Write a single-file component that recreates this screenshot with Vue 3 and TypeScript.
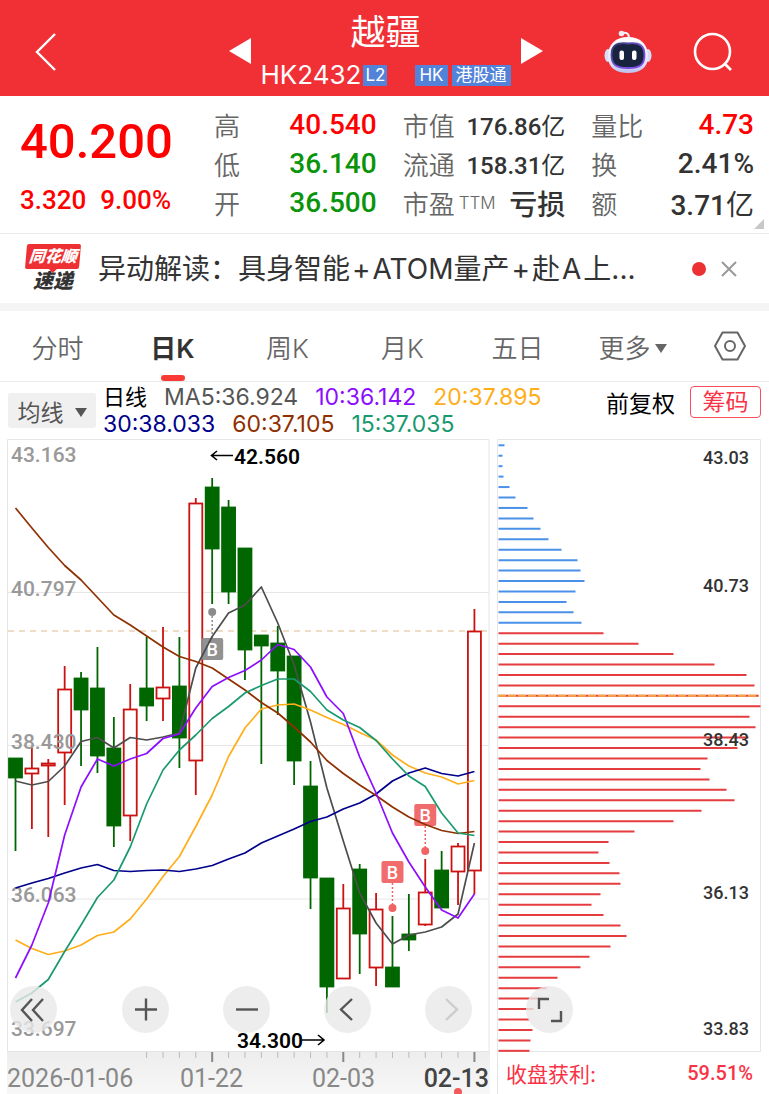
<script setup lang="ts">
import { ref } from 'vue'

interface Candle {
  up: boolean
  top: number
  bottom: number
  high: number
  low: number
}

interface Metric {
  label: string
  note?: string
  value: string
  unit?: string
  tone: 'up' | 'down' | 'plain'
  size: 'large' | 'small'
}

const metricGroups: Metric[][] = [
  [
    { label: '高', value: '40.540', tone: 'up', size: 'large' },
    { label: '低', value: '36.140', tone: 'down', size: 'large' },
    { label: '开', value: '36.500', tone: 'down', size: 'large' },
  ],
  [
    { label: '市值', value: '176.86', unit: '亿', tone: 'plain', size: 'small' },
    { label: '流通', value: '158.31', unit: '亿', tone: 'plain', size: 'small' },
    { label: '市盈', note: 'TTM', value: '亏损', tone: 'plain', size: 'large' },
  ],
  [
    { label: '量比', value: '4.73', tone: 'up', size: 'large' },
    { label: '换', value: '2.41%', tone: 'plain', size: 'large' },
    { label: '额', value: '3.71', unit: '亿', tone: 'plain', size: 'large' },
  ],
]

const tabs = ['分时', '日K', '周K', '月K', '五日', '更多']
const activeTab = ref('日K')
const newsVisible = ref(true)

const STEP = 16.39
const px = (i: number) => 15.5 + i * STEP

const c = (up: number, top: number, bottom: number, high: number, low: number): Candle => ({
  up: up === 1, top, bottom, high, low,
})

const candles: Candle[] = [
  c(0, 758, 778, 758, 851), c(1, 768, 774, 748, 829), c(1, 763, 766, 759, 837),
  c(1, 689, 753, 666, 805), c(0, 678, 710, 672, 766), c(0, 688, 756, 647, 773),
  c(0, 748, 826, 717, 847), c(1, 709, 816, 684, 841), c(0, 688, 706, 637, 721),
  c(1, 687, 699, 627, 721), c(0, 686, 738, 637, 768), c(1, 503, 761, 498, 795),
  c(0, 487, 549, 478, 604), c(0, 507, 592, 500, 604), c(0, 548, 650, 548, 680),
  c(0, 635, 646, 635, 764), c(0, 643, 671, 626, 715), c(0, 656, 761, 656, 785),
  c(0, 786, 878, 761, 909), c(0, 878, 987, 878, 1013), c(1, 908, 979, 884, 979),
  c(0, 869, 934, 864, 974), c(1, 909, 968, 893, 986), c(0, 967, 987, 916, 987),
  c(0, 934, 940, 894, 951), c(1, 892, 925, 859, 926), c(0, 870, 908, 851, 908),
  c(1, 846, 872, 843, 905), c(1, 631, 871, 609, 894),
]

const averages = [
  { color: '#4d4d4d', ys: [781, 785, 781.5, 766, 741.5, 737.5, 748, 737.5, 740, 737, 733, 668, 636.5, 613, 605, 587, 623, 665, 722, 788, 841, 893, 923, 944, 935, 932, 927, 914, 843] },
  { color: '#ffae1a', ys: [940, 948.5, 954.5, 951, 945, 935.5, 932, 919, 899, 876.5, 856.5, 826.5, 795, 756.5, 728, 709, 705, 704, 710, 717.5, 724.5, 732.5, 740, 755, 766, 773, 777, 784, 780.5] },
  { color: '#00008c', ys: [888, 883, 878.5, 873, 868, 864.5, 870.5, 871.5, 870.5, 870, 871.5, 869, 865.5, 859, 853, 843, 836, 829, 821.5, 817, 809, 803, 794, 781, 773, 768, 773.5, 776, 771.5] },
  { color: '#8f3000', ys: [508, 528, 547.5, 565.5, 580, 597.5, 615, 625, 636, 647, 656.5, 661.5, 668, 679, 690, 702.5, 713, 727, 742, 760.5, 773.5, 785, 795.5, 807, 817, 824.5, 830.5, 833.5, 831.5] },
  { color: '#8c0dff', ys: [978, 945, 903, 835, 787, 759, 766, 759, 753.5, 738.5, 734, 708, 686.5, 677.5, 670.5, 660, 644.5, 649.5, 667, 697, 713.5, 757, 793, 833, 862, 887, 910, 918, 894] },
  { color: '#1a9970', ys: [1002, 993, 979.5, 951.5, 925, 897.5, 880, 847, 804, 770, 750, 735, 718.5, 706.5, 693, 685.5, 679, 679, 691.5, 710, 720, 727.5, 740.5, 759, 776, 786.5, 813, 833, 835.5] },
]

const points = (ys: number[]) => ys.map((y, i) => `${px(i)},${y}`).join(' ')

const priceLabels = [
  { y: 462, text: '43.163' }, { y: 596, text: '40.797' }, { y: 749, text: '38.430' },
  { y: 902, text: '36.063' }, { y: 1036, text: '33.697' },
]

const markers = [
  { x: px(12), box: 638, dot: 612, line: [616, 638], fill: '#8c8c8c', r: 4 },
  { x: px(23), box: 861, dot: 908, line: [883, 905], fill: '#f06464', r: 4 },
  { x: px(25), box: 804, dot: 851, line: [826, 848], fill: '#f06464', r: 4 },
]

const ticks = Array.from({ length: 21 }, (_, k) => {
  const i = k + 8
  return { x: px(i), major: i === 12 || i === 20 || i === 28 }
})

const chipLengths = [
  6, 4, 4, 5, 11, 17, 29, 35, 42, 50, 63, 79, 82, 86, 77, 68, 75, 83,
  105, 140, 175, 216, 248, 256, 260, 262, 251, 257, 250, 239, 209,
  202, 211, 228, 236, 203, 175, 136, 110, 100, 111, 121, 122, 102, 93, 105, 122, 128,
  112, 91, 82, 59, 48, 41, 35, 31, 34, 32, 31,
]
const chips = chipLengths.map((len, i) => ({
  len,
  y: 445.3 + i * 10.44,
  color: i < 18 ? '#4a90e8' : '#e63c3f',
}))

const chipLabels = [
  { y: 464, text: '43.03' }, { y: 592, text: '40.73' }, { y: 746, text: '38.43' },
  { y: 899, text: '36.13' }, { y: 1035, text: '33.83' },
]

const tools = [
  { name: '最早', d: 'M22 13 L12 24 L22 35 M33 13 L23 24 L33 35', cls: 'first' },
  { name: '放大', d: 'M13 23.5 H35 M24 12.5 V34.5', cls: '' },
  { name: '缩小', d: 'M13 23.5 H35', cls: '' },
  { name: '向左', d: 'M28 13 L17 23.5 L28 34', cls: '' },
  { name: '向右', d: 'M21 13 L32 23.5 L21 34', cls: 'faint' },
  { name: '全屏', d: 'M13 23 V13 H23 M35 25 V35 H25', cls: 'corner' },
]
</script>

<template>
  <div class="page">
    <header class="top">
      <button class="icon-btn back" aria-label="返回">
        <svg width="24" height="42" viewBox="0 0 24 42"><path d="M21 3 L3 21 L21 39" fill="none" stroke="#fff" stroke-width="2.4" /></svg>
      </button>
      <div class="title">
        <button class="icon-btn" aria-label="上一只">
          <svg width="22" height="26" viewBox="0 0 22 26"><path d="M22 0 V26 L0 13 Z" fill="#fff" /></svg>
        </button>
        <div class="names">
          <h1>越疆</h1>
          <div class="code">
            <span>HK2432</span><span class="badge l2">L2</span>
            <span class="badge hk">HK</span><span class="badge">港股通</span>
          </div>
        </div>
        <button class="icon-btn" aria-label="下一只">
          <svg width="22" height="26" viewBox="0 0 22 26"><path d="M0 0 V26 L22 13 Z" fill="#fff" /></svg>
        </button>
      </div>
      <div class="actions">
        <button class="icon-btn" aria-label="智能助手">
          <svg width="48" height="46" viewBox="0 0 48 46">
            <defs>
              <linearGradient id="shell" x1="0" y1="0" x2="0" y2="1">
                <stop offset="0" stop-color="#ffffff" /><stop offset="0.7" stop-color="#e4e6fa" /><stop offset="1" stop-color="#bcbef0" />
              </linearGradient>
              <linearGradient id="rim" x1="0" y1="0" x2="1" y2="1">
                <stop offset="0" stop-color="#2b3566" /><stop offset="0.5" stop-color="#7656d8" /><stop offset="1" stop-color="#7b42e8" />
              </linearGradient>
            </defs>
            <path d="M18 4 C23 3 25 5 25 9" fill="none" stroke="#f3f0fa" stroke-width="2" />
            <circle cx="17.500" cy="4.500" r="2.800" fill="#f6eaf2" />
            <ellipse cx="4" cy="26.500" rx="3.500" ry="6.500" fill="#d9dcf5" />
            <ellipse cx="44" cy="26.500" rx="3.500" ry="6.500" fill="#d9dcf5" />
            <path d="M24 8 C36 8 44 15 44 27 C44 39 36 44 24 44 C12 44 4 39 4 27 C4 15 12 8 24 8 Z" fill="url(#shell)" />
            <path d="M24 14.500 C36 13 40.500 17 40.500 26 C40.500 36 36 39 24 39 C12 39 7.500 36 7.500 26 C7.500 17 12 13 24 14.500 Z" fill="#18233f" stroke="url(#rim)" stroke-width="1.800" />
            <rect x="15.500" y="21.500" width="4.500" height="9.500" rx="2" fill="#fff" />
            <rect x="28" y="21.500" width="4.500" height="9.500" rx="2" fill="#fff" />
          </svg>
        </button>
        <button class="icon-btn" aria-label="搜索">
          <svg width="42" height="42" viewBox="0 0 42 42" fill="none" stroke="#fff" stroke-width="2.600"><circle cx="20.500" cy="20.500" r="17.500" /><path d="M32 32 L39 39" /></svg>
        </button>
      </div>
    </header>

    <section class="quote">
      <div class="price">
        <strong>40.200</strong>
        <p><span>3.320</span><span>9.00%</span></p>
      </div>
      <dl v-for="(group, g) in metricGroups" :key="g" class="metrics">
        <div v-for="m in group" :key="m.label" class="metric">
          <dt>{{ m.label }}<small v-if="m.note">{{ m.note }}</small></dt>
          <dd :class="[m.tone, m.size]">{{ m.value }}<span v-if="m.unit">{{ m.unit }}</span></dd>
        </div>
      </dl>
      <svg class="corner-mark" width="10" height="10" viewBox="0 0 10 10"><path d="M10 0 V10 H0 Z" fill="#c8c8c8" /></svg>
    </section>

    <section v-if="newsVisible" class="news">
      <div class="logo">
        <span class="logo-top">同花顺</span>
        <span class="logo-bottom">速递</span>
      </div>
      <a href="#news">异动解读：具身智能<span>+</span>ATOM量产<span>+</span>赴<span>A</span>上...</a>
      <i class="dot"></i>
      <button class="icon-btn" aria-label="关闭" @click="newsVisible = false">
        <svg width="16" height="16" viewBox="0 0 16 16"><path d="M1 1 L15 15 M15 1 L1 15" stroke="#999" stroke-width="2" /></svg>
      </button>
    </section>

    <nav class="tabs">
      <button v-for="t in tabs" :key="t" :class="['tab', { active: t === activeTab }]" @click="activeTab = t">
        {{ t }}<svg v-if="t === '更多'" width="12" height="9" viewBox="0 0 12 9"><path d="M0 0 H12 L6 9 Z" fill="#666" /></svg>
      </button>
      <button class="icon-btn settings" aria-label="设置">
        <svg width="34" height="30" viewBox="0 0 34 30" fill="none" stroke="#666" stroke-width="2"><path d="M9.500 1.500 H24.500 L32 15 L24.500 28.500 H9.500 L2 15 Z" stroke-linejoin="round" /><circle cx="17" cy="15" r="5" /></svg>
      </button>
    </nav>

    <section class="legend">
      <button class="ma-btn">均线<svg width="12" height="9" viewBox="0 0 12 9"><path d="M0 0 H12 L6 9 Z" fill="#555" /></svg></button>
      <div class="ma-values">
        <p><b>日线</b><span class="m5">MA5:36.924</span><span class="m10">10:36.142</span><span class="m20">20:37.895</span></p>
        <p><span class="m30">30:38.033</span><span class="m60">60:37.105</span><span class="m15">15:37.035</span></p>
      </div>
      <button class="adjust">前复权</button>
      <button class="chip-btn">筹码</button>
    </section>

    <main class="charts">
      <svg class="kline" viewBox="0 439 490 655">
        <defs>
          <linearGradient id="axis" x1="0" y1="0" x2="0" y2="1">
            <stop offset="0" stop-color="#ededed" /><stop offset="1" stop-color="#f7f7f7" />
          </linearGradient>
        </defs>
        <rect x="7" y="1051" width="483" height="43" fill="url(#axis)" />
        <path d="M7.500 1051.500 V439.500 H489 V1051.500 Z M8 592.500 H489 M8 745.500 H489 M8 899 H489" fill="none" stroke="#e6e6e6" />
        <path d="M8 631 H489" stroke="#dfb98a" stroke-dasharray="6 5" />
        <g v-for="(k, i) in candles" :key="i" :stroke="k.up ? '#cc1111' : '#006600'" stroke-width="1.800">
          <line :x1="px(i)" :x2="px(i)" :y1="k.high" :y2="k.low" />
          <rect :x="px(i) - 6.500" :y="k.top + 0.500" width="13" :height="k.bottom - k.top - 1" :fill="k.up ? '#fff' : '#006600'" />
        </g>
        <g class="grey">
          <text v-for="l in priceLabels" :key="l.text" x="11" :y="l.y">{{ l.text }}</text>
        </g>
        <g v-for="(m, i) in markers" :key="'m' + i">
          <line :x1="m.x" :x2="m.x" :y1="m.line[0]" :y2="m.line[1]" :stroke="m.fill" stroke-width="1.500" stroke-dasharray="2 2" />
          <circle :cx="m.x" :cy="m.dot" :r="m.r" :fill="m.fill" />
          <rect :x="m.x - 11" :y="m.box" width="22" height="22" rx="2" :fill="m.fill" opacity="0.950" />
          <text class="marker" :x="m.x" :y="m.box + 18">B</text>
        </g>
        <polyline v-for="a in averages" :key="a.color" :points="points(a.ys)" fill="none" :stroke="a.color" stroke-width="1.700" stroke-linejoin="round" />
        <g class="extreme">
          <text x="234" y="464">42.560</text>
          <text x="237" y="1048">34.300</text>
          <path d="M233 455.500 H212 M217 451 L211.500 455.500 L217 460 M302 1040 H323 M318 1035 L324 1040 L318 1045" fill="none" stroke="#000" stroke-width="1.600" />
        </g>
        <line v-for="t in ticks" :key="t.x" :x1="t.x" :x2="t.x" y1="1052" :y2="t.major ? 1062 : 1058" :stroke="t.major ? '#888' : '#bbb'" :stroke-width="t.major ? 2 : 1" />
        <g class="dates">
          <text x="7" y="1087">2026-01-06</text>
          <text x="180" y="1087">01-22</text>
          <text x="312" y="1087">02-03</text>
          <text class="today" x="489" y="1087">02-13</text>
        </g>
        <circle cx="458" cy="1092" r="4" fill="#f05a5a" />
      </svg>

      <div class="distribution">
        <svg viewBox="490 439 279 613">
          <path d="M497.500 1052 V439.500 H760.500 V1052 M498 1051.500 H760" fill="none" stroke="#e6e6e6" />
          <line v-for="b in chips" :key="b.y" x1="498.500" :x2="498.500 + b.len" :y1="b.y" :y2="b.y" :stroke="b.color" stroke-width="2" />
          <path d="M498 695.700 H759" stroke="#f5a742" stroke-width="2" stroke-dasharray="8 2" />
          <text v-for="l in chipLabels" :key="l.text" x="749" :y="l.y">{{ l.text }}</text>
        </svg>
        <p class="profit"><span>收盘获利:</span><b>59.51%</b></p>
      </div>

      <div class="tools">
        <button v-for="t in tools" :key="t.name" :aria-label="t.name" :class="t.cls">
          <svg width="47" height="47" viewBox="0 0 47 47"><path :d="t.d" fill="none" stroke-width="2.400" /></svg>
        </button>
      </div>
    </main>
  </div>
</template>

<style>
body {
  margin: 0;
  background: #fff;
}
</style>

<style scoped>
.page {
  font-family: Inter, "Noto Sans CJK SC", sans-serif;
  color: #333;
  background: #fff;
}
button {
  border: 0;
  padding: 0;
  background: none;
  font: inherit;
  color: inherit;
  cursor: pointer;
}
p, h1, dl, dd {
  margin: 0;
}
.icon-btn {
  display: flex;
  align-items: center;
  justify-content: center;
}
.top {
  display: grid;
  grid-template-columns: 1fr auto 1fr;
  height: 96px;
  background: #f03035;
  color: #fff;
}
.back {
  justify-self: start;
  padding: 8px 0 0 34px;
}
.title {
  display: flex;
  align-items: center;
  gap: 10px;
  padding-left: 2px;
}
.title .icon-btn {
  padding-top: 6px;
}
.names {
  display: flex;
  flex-direction: column;
  align-items: center;
}
h1 {
  font-size: 35px;
  line-height: 44px;
  font-weight: 400;
  margin-top: 8px;
}
.code {
  display: flex;
  align-items: center;
  font-size: 26px;
  line-height: 30px;
  margin-top: 6px;
  margin-bottom: 4px;
}
.badge {
  background: #5383d9;
  font-size: 17px;
  line-height: 21px;
  padding: 0 4px;
}
.l2 {
  margin-left: 2px;
  padding: 0 2px;
}
.hk {
  margin: 0 4px 0 28px;
}
.actions {
  display: flex;
  justify-content: flex-end;
  gap: 40px;
  padding: 8px 35px 0 0;
}
.quote {
  position: relative;
  display: grid;
  grid-template-columns: 188px 1fr 1fr 1fr;
  column-gap: 26px;
  padding: 9px 15px 11px 0;
  border-bottom: 1px solid #e9e9e9;
}
.price {
  padding-left: 20px;
  color: #f00;
  font-family: Roboto, sans-serif;
  font-weight: 500;
}
.price strong {
  display: block;
  font-size: 49px;
  line-height: 60px;
  font-weight: 500;
  padding-top: 7px;
}
.price p {
  display: flex;
  gap: 14px;
  font-size: 26px;
  line-height: 32px;
  padding-top: 12px;
}
.metric {
  display: flex;
  justify-content: space-between;
  align-items: center;
  height: 39px;
}
dt {
  font-size: 26px;
  color: #666;
  font-weight: 350;
  white-space: nowrap;
}
dt small {
  font-size: 17px;
  margin-left: 4px;
  vertical-align: 5px;
}
dd {
  font-family: Roboto, "Noto Sans CJK SC", sans-serif;
  font-weight: 500;
  white-space: nowrap;
}
dd span {
  font-weight: 400;
}
.large {
  font-size: 28px;
}
.small {
  font-size: 24px;
}
.up {
  color: #f00;
}
.down {
  color: #0a940a;
}
.corner-mark {
  position: absolute;
  right: 5px;
  bottom: 4px;
}
.news {
  display: flex;
  align-items: center;
  height: 69px;
  padding: 0 32px 0 24px;
  border-bottom: 8px solid #f4f4f4;
}
.logo {
  display: flex;
  flex-direction: column;
  align-items: center;
  width: 58px;
  font-weight: 900;
  font-style: italic;
  white-space: nowrap;
}
.logo-top {
  position: relative;
  width: 54px;
  background: #ee3035;
  color: #fff;
  border-radius: 2px;
  transform: skewX(-5deg);
  font-size: 16px;
  line-height: 25px;
  text-align: center;
}
.logo-top::after {
  content: "";
  position: absolute;
  left: 24px;
  top: 25px;
  border: 4px solid transparent;
  border-top-color: #ee3035;
  border-bottom: 0;
}
.logo-bottom {
  font-size: 20px;
  line-height: 24px;
}
.news a {
  flex: 1;
  margin-left: 16px;
  padding-bottom: 3px;
  color: #333;
  text-decoration: none;
  font-size: 28px;
  white-space: nowrap;
}
.news a span {
  margin: 0 2px;
}
.dot {
  width: 14px;
  height: 14px;
  border-radius: 50%;
  background: #ec3134;
  margin-right: 15px;
}
.tabs {
  display: flex;
  height: 70px;
  border-bottom: 1px solid #e9e9e9;
}
.tab {
  position: relative;
  flex: 115 1 0;
  font-size: 26px;
  color: #666;
  font-weight: 350;
}
.tab svg {
  margin-left: 4px;
  vertical-align: 5px;
}
.active {
  color: #333;
  font-weight: 600;
}
.active::after {
  content: "";
  position: absolute;
  left: 50%;
  bottom: 0;
  width: 24px;
  height: 6px;
  margin-left: -12px;
  border-radius: 3px;
  background: #f93a35;
}
.settings {
  flex: 79 1 0;
}
.legend {
  display: flex;
  align-items: flex-start;
  height: 57px;
  padding: 0 8px;
}
.ma-btn {
  width: 88px;
  height: 35px;
  margin-top: 11px;
  border-radius: 3px;
  background: #f0f0f0;
  font-size: 23px;
  color: #555;
}
.ma-btn svg {
  margin-left: 11px;
  vertical-align: 4px;
}
.ma-values {
  flex: 1;
  padding: 2px 0 0 7px;
}
.ma-values p {
  display: flex;
  gap: 17px;
  font-size: 23px;
  line-height: 27px;
  white-space: nowrap;
}
.ma-values b {
  color: #000;
  font-size: 22px;
  font-weight: 400;
}
.m5 { color: #555; }
.m10 { color: #8c0dff; }
.m20 { color: #ffae1a; }
.m30 { color: #00008c; }
.m60 { color: #8f3000; }
.m15 { color: #1a9970; }
.adjust {
  height: 32px;
  margin-top: 3px;
  font-size: 23px;
  color: #000;
}
.chip-btn {
  width: 71px;
  height: 32px;
  margin: 4px 0 0 15px;
  border: 1px solid #fa4d5b;
  border-radius: 4px;
  color: #fa3246;
  font-size: 23px;
  line-height: 28px;
}
.charts {
  position: relative;
  display: grid;
  grid-template-columns: 490fr 279fr;
}
.charts svg {
  display: block;
  font-family: Roboto, sans-serif;
}
.kline,
.distribution > svg {
  width: 100%;
}
.grey {
  font-size: 21px;
  font-weight: 500;
  fill: #999;
}
.marker {
  font-size: 18px;
  font-weight: 500;
  fill: #fff;
  text-anchor: middle;
}
.extreme {
  font-size: 21px;
  font-weight: 600;
  fill: #000;
}
.dates {
  font-size: 25px;
  fill: #888;
}
.today {
  fill: #444;
  font-weight: 500;
  text-anchor: end;
}
.distribution text {
  font-size: 18px;
  font-weight: 500;
  fill: #333;
  text-anchor: end;
}
.profit {
  display: flex;
  justify-content: space-between;
  align-items: center;
  height: 42px;
  margin-left: 7px;
  padding: 0 16px 0 8px;
  border-left: 1px solid #e6e6e6;
  box-sizing: border-box;
  color: #fa3246;
  font-size: 21px;
}
.profit b {
  font-family: Roboto, sans-serif;
  font-size: 20px;
  font-weight: 500;
}
.tools {
  position: absolute;
  left: 10px;
  bottom: 61px;
  display: flex;
  gap: 54px;
}
.tools button {
  width: 47px;
  height: 47px;
  border-radius: 50%;
  background: rgba(232, 232, 232, 0.8);
  stroke: #555;
}
.tools .first {
  margin-right: 11px;
}
.tools .faint {
  stroke: #ccc;
}
</style>
